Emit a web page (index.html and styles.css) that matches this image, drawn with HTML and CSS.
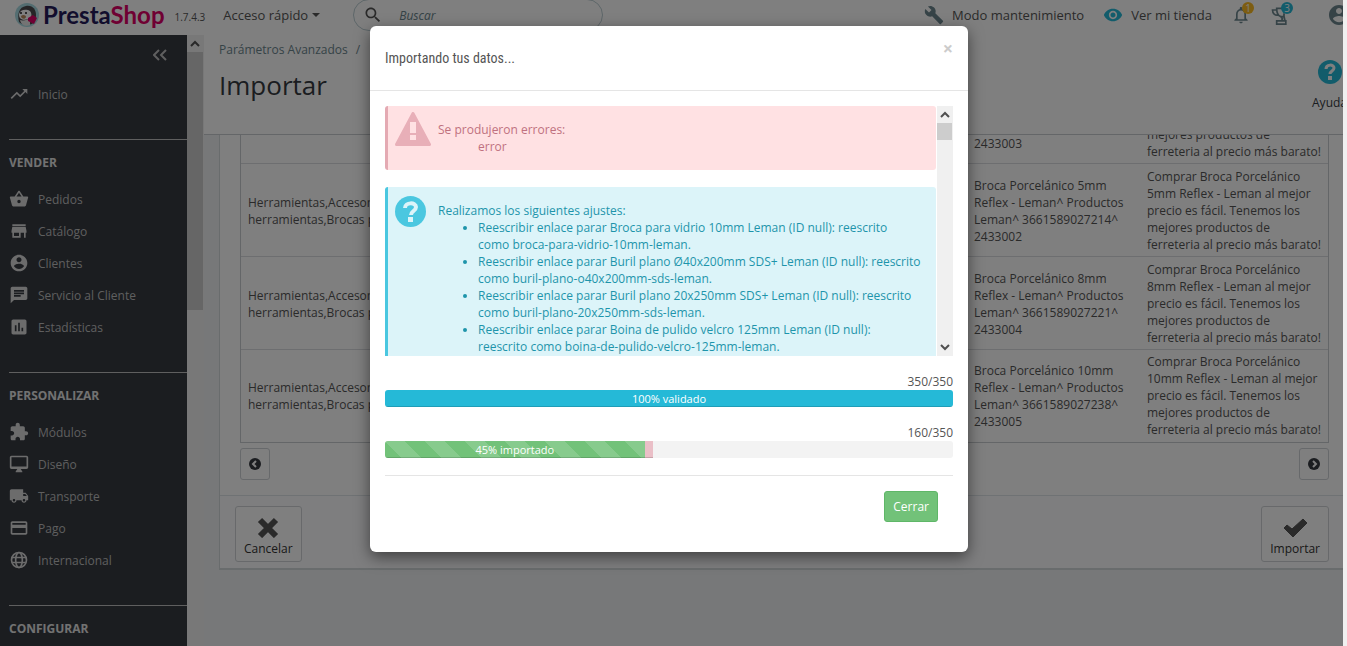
FILE: index.html
```html
<!DOCTYPE html>
<html lang="es">
<head>
<meta charset="utf-8">
<meta name="viewport" content="width=device-width, initial-scale=1">
<title>Importar</title>
<link rel="stylesheet" href="styles.css">
</head>
<body>
<div class="app">
  <header class="topbar">
    <a class="brand" href="#">
      <svg class="brand-mark" viewBox="0 0 24 24" aria-hidden="true">
        <circle cx="12" cy="12" r="12" fill="#a9dbe2"/>
        <path d="M4 19C2 11 4 4 11 3c7-1 10 4 10 9 0 4-1 7-4 9-4 1-10 1-13-2z" fill="#4c4a4e"/>
        <path d="M4 11c1-4 5-5 9-4 3 1 4 4 3 7-2 3-9 4-11 1-1-1-1-3-1-4z" fill="#fff"/>
        <path d="M5 17c3 1 8 0 10-2v7c-4 2-9 0-10-5z" fill="#e8e8e8"/>
        <path d="M6 13c2-2 5-1 5 1-1 3-5 2-5-1z" fill="#b98a5c"/>
        <circle cx="6" cy="10" r="1" fill="#222"/><circle cx="11" cy="10" r="1" fill="#222"/>
        <path d="M13 15l5-3 4 3-3 6-6-3z" fill="#df0067"/>
      </svg>
      <span class="brand-name">Presta<span class="brand-accent">Shop</span></span>
    </a>
    <span class="version">1.7.4.3</span>
    <button class="quick" type="button">Acceso rápido <span class="caret"></span></button>
    <form class="search" role="search">
      <label for="q" aria-label="Buscar"><svg class="icon" viewBox="0 0 24 24"><path d="M15.500 14h-.790l-.280-.270C15.410 12.590 16 11.110 16 9.500 16 5.910 13.090 3 9.500 3S3 5.910 3 9.500 5.910 16 9.500 16c1.610 0 3.090-.590 4.230-1.570l.270.280v.790l5 4.990L20.490 19l-4.990-5zm-6 0C7.010 14 5 11.990 5 9.500S7.010 5 9.500 5 14 7.010 14 9.500 11.990 14 9.500 14z"/></svg></label>
      <input id="q" type="text" placeholder="Buscar">
    </form>
    <nav class="tools">
      <a class="tool" href="#"><svg class="icon" viewBox="0 0 24 24"><path d="M22.700 19l-9.100-9.100c.9-2.300.4-5-1.500-6.900-2-2-5-2.400-7.400-1.300L9 6 6 9 1.600 4.700C.4 7.100.9 10.100 2.900 12.100c1.900 1.900 4.600 2.400 6.900 1.500l9.100 9.100c.4.400 1 .4 1.400 0l2.300-2.300c.5-.4.5-1.100.1-1.400z"/></svg>Modo mantenimiento</a>
      <a class="tool" href="#"><svg class="icon cyan" viewBox="0 0 24 24"><path d="M12 4.500C7 4.500 2.730 7.610 1 12c1.730 4.390 6 7.500 11 7.500s9.270-3.110 11-7.500c-1.730-4.390-6-7.500-11-7.500zM12 17c-2.760 0-5-2.240-5-5s2.240-5 5-5 5 2.240 5 5-2.240 5-5 5zm0-8c-1.660 0-3 1.340-3 3s1.340 3 3 3 3-1.340 3-3-1.340-3-3-3z"/></svg>Ver mi tienda</a>
      <button class="notice" type="button" aria-label="Notificaciones"><svg class="icon" viewBox="0 0 24 24"><path d="M12 22c1.100 0 2-.9 2-2h-4c0 1.100.9 2 2 2zm6-6v-5c0-3.070-1.630-5.640-4.500-6.320V4c0-.830-.670-1.500-1.500-1.500s-1.500.670-1.500 1.500v.680C7.640 5.360 6 7.920 6 11v5l-2 2v1h16v-1l-2-2zm-2 1H8v-6c0-2.480 1.510-4.500 4-4.500s4 2.020 4 4.500v6z"/></svg><span class="badge amber">1</span></button>
      <button class="notice" type="button" aria-label="Logros"><svg class="icon line" viewBox="0 0 24 24"><path d="M17 4H8c0 5 1 9 5 10h4M8 6H3c0 4 3 7 7 6M13 14c2 1 2 3 1 5M17 10c-1 3 0 6 1 9M8 19h11v4H8z"/></svg><span class="badge blue">3</span></button>
      <button class="account" type="button" aria-label="Cuenta"><svg class="icon" viewBox="0 0 24 24"><path d="M12 2C6.480 2 2 6.480 2 12s4.480 10 10 10 10-4.480 10-10S17.520 2 12 2zm0 3c1.660 0 3 1.340 3 3s-1.340 3-3 3-3-1.340-3-3 1.340-3 3-3zm0 14.200c-2.500 0-4.710-1.280-6-3.220.030-1.990 4-3.080 6-3.080 1.990 0 5.970 1.090 6 3.080-1.290 1.940-3.500 3.220-6 3.220z"/></svg></button>
    </nav>
  </header>

  <div class="shell">
    <nav class="sidebar">
      <button class="collapse" type="button" aria-label="Contraer"><svg viewBox="0 0 14 12"><path d="M6 1L1 6l5 5M13 1L8 6l5 5"/></svg></button>
      <a class="item home" href="#"><svg class="icon" viewBox="0 0 24 24"><path d="M16 6l2.290 2.290-4.880 4.880-4-4L2 16.590 3.410 18l6-6 4 4 6.300-6.290L22 12V6z"/></svg>Inicio</a>
      <section class="group">
        <h2>VENDER</h2>
        <a class="item" href="#"><svg class="icon" viewBox="0 0 24 24"><path d="M17.210 9l-4.380-6.560c-.190-.280-.510-.420-.830-.420-.320 0-.640.140-.830.430L6.790 9H2c-.550 0-1 .450-1 1 0 .090.010.180.040.270l2.540 9.270c.230.840 1 1.460 1.920 1.460h13c.920 0 1.690-.620 1.930-1.460l2.540-9.270L23 10c0-.550-.450-1-1-1h-4.790zM9 9l3-4.400L15 9H9zm3 8c-1.100 0-2-.9-2-2s.9-2 2-2 2 .9 2 2-.9 2-2 2z"/></svg>Pedidos</a>
        <a class="item" href="#"><svg class="icon" viewBox="0 0 24 24"><path d="M20 4H4v2h16V4zm1 10v-2l-1-5H4l-1 5v2h1v6h10v-6h4v6h2v-6h1zm-9 4H6v-4h6v4z"/></svg>Catálogo</a>
        <a class="item" href="#"><svg class="icon" viewBox="0 0 24 24"><path d="M12 2C6.480 2 2 6.480 2 12s4.480 10 10 10 10-4.480 10-10S17.520 2 12 2zm0 3c1.660 0 3 1.340 3 3s-1.340 3-3 3-3-1.340-3-3 1.340-3 3-3zm0 14.200c-2.500 0-4.710-1.280-6-3.220.030-1.990 4-3.080 6-3.080 1.990 0 5.970 1.090 6 3.080-1.290 1.940-3.500 3.220-6 3.220z"/></svg>Clientes</a>
        <a class="item" href="#"><svg class="icon" viewBox="0 0 24 24"><path d="M20 2H4c-1.100 0-1.990.9-1.990 2L2 22l4-4h14c1.100 0 2-.9 2-2V4c0-1.100-.9-2-2-2zM6 9h12v2H6V9zm8 5H6v-2h8v2zm4-6H6V6h12v2z"/></svg>Servicio al Cliente</a>
        <a class="item" href="#"><svg class="icon" viewBox="0 0 24 24"><path d="M19 3H5c-1.100 0-2 .9-2 2v14c0 1.100.9 2 2 2h14c1.100 0 2-.9 2-2V5c0-1.100-.9-2-2-2zM9 17H7v-7h2v7zm4 0h-2V7h2v10zm4 0h-2v-4h2v4z"/></svg>Estadísticas</a>
      </section>
      <section class="group">
        <h2>PERSONALIZAR</h2>
        <a class="item" href="#"><svg class="icon" viewBox="0 0 24 24"><path d="M20.500 11H19V7c0-1.100-.9-2-2-2h-4V3.500C13 2.120 11.880 1 10.500 1S8 2.120 8 3.500V5H4c-1.100 0-1.990.9-1.990 2v3.800H3.500c1.490 0 2.700 1.210 2.700 2.700s-1.210 2.700-2.700 2.700H2V20c0 1.100.9 2 2 2h3.800v-1.500c0-1.490 1.210-2.700 2.700-2.700 1.490 0 2.700 1.210 2.700 2.700V22H17c1.100 0 2-.9 2-2v-4h1.500c1.380 0 2.500-1.120 2.500-2.500S21.880 11 20.500 11z"/></svg>Módulos</a>
        <a class="item" href="#"><svg class="icon" viewBox="0 0 24 24"><path d="M21 2H3c-1.100 0-2 .9-2 2v12c0 1.100.9 2 2 2h7l-2 3v1h8v-1l-2-3h7c1.100 0 2-.9 2-2V4c0-1.100-.9-2-2-2zm0 13H3V4h18v11z"/></svg>Diseño</a>
        <a class="item" href="#"><svg class="icon" viewBox="0 0 24 24"><path d="M20 8h-3V4H3c-1.100 0-2 .9-2 2v11h2c0 1.660 1.340 3 3 3s3-1.340 3-3h6c0 1.660 1.340 3 3 3s3-1.340 3-3h2v-5l-3-4zM6 18.500c-.830 0-1.500-.670-1.500-1.500s.670-1.500 1.500-1.500 1.500.670 1.500 1.500-.670 1.500-1.500 1.500zm13.500-9l1.960 2.500H17V9.500h2.500zm-1.500 9c-.830 0-1.500-.670-1.500-1.500s.670-1.500 1.500-1.500 1.500.670 1.500 1.500-.670 1.500-1.500 1.500z"/></svg>Transporte</a>
        <a class="item" href="#"><svg class="icon" viewBox="0 0 24 24"><path d="M20 4H4c-1.110 0-1.990.890-1.990 2L2 18c0 1.110.890 2 2 2h16c1.110 0 2-.890 2-2V6c0-1.110-.890-2-2-2zm0 14H4v-6h16v6zm0-10H4V6h16v2z"/></svg>Pago</a>
        <a class="item" href="#"><svg class="icon line" viewBox="0 0 24 24"><circle cx="12" cy="12" r="9"/><ellipse cx="12" cy="12" rx="4" ry="9"/><path d="M4 9h16M4 15h16"/></svg>Internacional</a>
      </section>
      <section class="group">
        <h2>CONFIGURAR</h2>
      </section>
    </nav>
    <div class="rail side-rail" aria-hidden="true">
      <svg class="arrow" viewBox="0 0 16 17"><path d="M4 11l4-4 4 4"/></svg>
      <span class="thumb"></span>
    </div>

    <main class="main">
      <div class="page-head">
        <div>
          <p class="crumbs"><a href="#">Parámetros Avanzados</a><span>/</span></p>
          <h1>Importar</h1>
        </div>
        <button class="help" type="button"><svg viewBox="0 0 24 24"><circle cx="12" cy="12" r="12" fill="#25b9d7"/><path d="M8 9c0-5 8-5 8-1 0 3-4 3-4 6" fill="none" stroke="#fff" stroke-width="3"/><path d="M10 16h4v4h-4z" fill="#fff"/></svg>Ayuda</button>
      </div>
      <div class="viewport">
        <div class="panel">
          <div class="panel-body">
            <table class="data">
              <colgroup><col class="c-cat"><col><col class="c-title"><col class="c-desc"></colgroup>
              <tbody>
                <tr><td></td><td></td><td>Broca Porcelánico 6mm Reflex - Leman^ Productos Leman^ 3661589027207^ 2433003</td><td>Comprar Broca Porcelánico 6mm Reflex - Leman al mejor precio es fácil. Tenemos los mejores productos de ferreteria al precio más barato!</td></tr>
                <tr><td>Herramientas,Accesorios herramientas,Brocas porcelánico</td><td></td><td>Broca Porcelánico 5mm Reflex - Leman^ Productos Leman^ 3661589027214^ 2433002</td><td>Comprar Broca Porcelánico 5mm Reflex - Leman al mejor precio es fácil. Tenemos los mejores productos de ferreteria al precio más barato!</td></tr>
                <tr><td>Herramientas,Accesorios herramientas,Brocas porcelánico</td><td></td><td>Broca Porcelánico 8mm Reflex - Leman^ Productos Leman^ 3661589027221^ 2433004</td><td>Comprar Broca Porcelánico 8mm Reflex - Leman al mejor precio es fácil. Tenemos los mejores productos de ferreteria al precio más barato!</td></tr>
                <tr><td>Herramientas,Accesorios herramientas,Brocas porcelánico</td><td></td><td>Broca Porcelánico 10mm Reflex - Leman^ Productos Leman^ 3661589027238^ 2433005</td><td>Comprar Broca Porcelánico 10mm Reflex - Leman al mejor precio es fácil. Tenemos los mejores productos de ferreteria al precio más barato!</td></tr>
              </tbody>
            </table>
            <div class="pager">
              <button type="button" aria-label="Anterior"><svg viewBox="0 0 12 12"><circle cx="6" cy="6" r="6" fill="#363a41"/><path d="M7 3L4 6l3 3" fill="none" stroke="#fff" stroke-width="2"/></svg></button>
              <button type="button" aria-label="Siguiente"><svg viewBox="0 0 12 12"><circle cx="6" cy="6" r="6" fill="#363a41"/><path d="M5 3l3 3-3 3" fill="none" stroke="#fff" stroke-width="2"/></svg></button>
            </div>
          </div>
          <div class="panel-foot">
            <button type="button"><svg viewBox="0 0 24 22"><path d="M4 4l16 16M20 4L4 20" fill="none" stroke="#555" stroke-width="6"/></svg>Cancelar</button>
            <button type="button"><svg viewBox="0 0 24 22"><path d="M1 12l3-3 5 4L20 3l4 4-14 14z" fill="#555" stroke="#555" stroke-linejoin="round"/></svg>Importar</button>
          </div>
        </div>
      </div>
    </main>
  </div>

  <div class="overlay">
    <div class="modal" role="dialog" aria-modal="true" aria-labelledby="modal-title">
      <div class="modal-head">
        <h2 id="modal-title">Importando tus datos...</h2>
        <button class="close" type="button" aria-label="Cerrar ventana">×</button>
      </div>
      <div class="modal-body">
        <div class="log">
          <div class="messages">
            <div class="alert danger">
              <svg viewBox="0 0 36 34" aria-hidden="true"><path d="M18 1.500L34.500 32.500H1.500z" fill="#e8afb8" stroke="#e8afb8" stroke-width="3" stroke-linejoin="round"/><path d="M15 10h6v11h-6zM15 23h6v5h-6z" fill="#ffe1e3"/></svg>
              <div><p>Se produjeron errores:</p><ul><li>error</li></ul></div>
            </div>
            <div class="alert info">
              <svg viewBox="0 0 31 31" aria-hidden="true"><circle cx="15.500" cy="15.500" r="15.500" fill="#4ac7e0"/><path d="M10 12c0-6 11-6 11-1 0 4-5 4-5 8" fill="none" stroke="#dcf4f9" stroke-width="4"/><path d="M13 21h5v5h-5z" fill="#dcf4f9"/></svg>
              <div><p>Realizamos los siguientes ajustes:</p>
                <ul>
                  <li>Reescribir enlace parar Broca para vidrio 10mm Leman (ID null): reescrito como broca-para-vidrio-10mm-leman.</li>
                  <li>Reescribir enlace parar Buril plano Ø40x200mm SDS+ Leman (ID null): reescrito como buril-plano-o40x200mm-sds-leman.</li>
                  <li>Reescribir enlace parar Buril plano 20x250mm SDS+ Leman (ID null): reescrito como buril-plano-20x250mm-sds-leman.</li>
                  <li>Reescribir enlace parar Boina de pulido velcro 125mm Leman (ID null): reescrito como boina-de-pulido-velcro-125mm-leman.</li>
                </ul>
              </div>
            </div>
          </div>
          <div class="rail" aria-hidden="true">
            <svg class="arrow" viewBox="0 0 16 17"><path d="M4 11l4-4 4 4"/></svg>
            <span class="thumb"></span>
            <svg class="arrow" viewBox="0 0 16 17"><path d="M4 6l4 4 4-4"/></svg>
          </div>
        </div>
        <div class="step">
          <span class="count">350/350</span>
          <div class="progress"><div class="bar done" style="width:100%">100% validado</div></div>
        </div>
        <div class="step">
          <span class="count">160/350</span>
          <div class="progress"><div class="bar striped" style="width:45.71%">45% importado</div><div class="bar rest" style="width:1.4%"></div></div>
        </div>
        <div class="modal-foot"><button class="primary" type="button">Cerrar</button></div>
      </div>
    </div>
  </div>
</div>
</body>
</html>
```

FILE: styles.css
```css
* { box-sizing: border-box; }
body {
  margin: 0;
  padding-right: 4px;
  background: #f0f0f0;
  color: #555;
  font: 12px/17px "Open Sans", "Noto Sans", sans-serif;
}
h1, h2, p, ul { margin: 0; }
a { color: inherit; text-decoration: none; }
button { font: inherit; color: inherit; padding: 0; border: 0; background: none; cursor: pointer; }
svg { display: block; flex: none; }
.icon { width: 20px; height: 20px; fill: currentColor; }
.icon.line { fill: none; stroke: currentColor; stroke-width: 2; }

.app {
  position: relative;
  display: flex;
  flex-direction: column;
  height: 100vh;
  overflow: hidden;
}

/* Top bar */
.topbar {
  display: flex;
  align-items: center;
  flex: none;
  height: 35px;
  padding: 0 0 5px 15px;
  background: #fff;
  color: #555;
  font-size: 13px;
}
.brand { display: flex; align-items: center; gap: 4px; }
.brand-mark { width: 24px; height: 24px; }
.brand-name { color: #251b5b; font: 700 24px/30px Lato, sans-serif; }
.brand-accent { color: #df0067; }
.version { margin: 4px 18px 0 10px; font-size: 10px; }
.quick { display: flex; align-items: center; gap: 4px; }
.caret { border: 4px solid transparent; border-top-color: currentColor; border-bottom: 0; }
.search {
  display: flex;
  align-items: center;
  gap: 16px;
  width: 250px;
  height: 32px;
  margin-left: 33px;
  padding-left: 9px;
  border: 1px solid #bbcdd2;
  border-radius: 16px;
}
.search input {
  width: 160px;
  padding: 0;
  border: 0;
  outline: 0;
  background: none;
  font: italic 12px/17px "Open Sans", sans-serif;
}
.search input::placeholder { color: #6c868e; opacity: 1; }
.tools { display: flex; align-items: center; gap: 19px; margin-left: auto; margin-right: -8px; }
.tool { display: flex; align-items: center; gap: 8px; white-space: nowrap; }
.tools .icon { color: #6c868e; }
.tools .icon.cyan { color: #25b9d7; }
.notice { position: relative; }
.account { margin-left: 18px; }
.account .icon { width: 24px; height: 24px; }
.badge {
  position: absolute;
  top: -3px;
  right: -3px;
  width: 12px;
  height: 12px;
  border-radius: 6px;
  color: #fff;
  font-size: 10px;
  line-height: 12px;
  text-align: center;
}
.badge.amber { background: #fbbb22; }
.badge.blue { background: #25b9d7; }

/* Sidebar */
.shell { display: flex; flex: 1; min-height: 0; }
.sidebar {
  display: flex;
  flex-direction: column;
  flex: none;
  width: 187px;
  padding-left: 9px;
  overflow: hidden;
  background: #363a41;
  color: #bebebe;
}
.collapse { align-self: flex-end; margin: 14px 20px 17px 0; }
.collapse svg { width: 14px; height: 12px; fill: none; stroke: #bebebe; stroke-width: 2; }
.item { display: flex; align-items: center; gap: 9px; height: 32px; flex: none; }
.item .icon { color: #d8d8d8; }
.home { margin-bottom: 29px; }
.group { flex: none; padding-bottom: 29px; border-top: 1px solid #bebebe; }
.group h2 { padding: 14px 0 12px; color: #e4e4e4; font-size: 12px; font-weight: 700; line-height: 17px; }

/* Drawn scrollbars */
.rail { display: flex; flex-direction: column; flex: none; width: 16px; background: #f0f0f0; }
.side-rail { width: 17px; }
.arrow { width: 16px; height: 17px; fill: none; stroke: #505050; stroke-width: 2; }
.arrow:last-child { margin-top: auto; }
.thumb { height: 17px; margin-right: 1px; background: #cdcdcd; }
.side-rail .thumb { height: 258px; }

/* Main area */
.main { display: flex; flex-direction: column; flex: 1; min-width: 0; background: #eff1f2; }
.page-head {
  display: flex;
  justify-content: space-between;
  flex: none;
  height: 100px;
  padding: 6px 0 0 15px;
  overflow: hidden;
  background: #fff;
  border-bottom: 1px solid #c8ccd0;
}
.crumbs { display: flex; gap: 8px; color: #6c868e; }
.page-head h1 { padding-top: 7px; color: #363a41; font-size: 26px; font-weight: 400; line-height: 40px; }
.help {
  display: flex;
  flex-direction: column;
  align-items: center;
  gap: 10px;
  align-self: flex-start;
  margin: 19px -4px 0 0;
  color: #363a41;
}
.help svg { width: 24px; height: 24px; }
.viewport { flex: 1; min-height: 0; overflow: hidden; padding-left: 15px; }
.panel { background: #fff; border: 1px solid #d3d8db; border-width: 0 0 2px 1px; }
.panel-body { padding: 0 14px 15px 20px; }
.data {
  width: 100%;
  margin-top: -65px;
  border: 1px solid #c8ccd0;
  border-collapse: separate;
  border-spacing: 0;
  table-layout: fixed;
}
.data td { height: 93px; padding: 4px 7px 3px; border-bottom: 1px solid #dadde0; vertical-align: middle; }
.data tr:last-child td { height: 92px; padding: 3px 7px 4px; border-bottom: 0; }
.c-cat { width: 210px; }
.c-title { width: 173px; }
.c-desc { width: 188px; }
.pager { display: flex; justify-content: space-between; padding-top: 5px; }
.pager button {
  display: grid;
  place-items: center;
  width: 30px;
  height: 32px;
  border: 1px solid #ced2d6;
  border-radius: 3px;
}
.pager svg { width: 12px; height: 12px; }
.panel-foot {
  display: flex;
  justify-content: space-between;
  padding: 10px 14px 6px 15px;
  background: #fcfdfe;
  border-top: 1px solid #dfe4e8;
}
.panel-foot button {
  display: flex;
  flex-direction: column;
  align-items: center;
  gap: 2px;
  padding: 9px 8px 4px;
  border: 1px solid #d0d3d7;
  border-radius: 3px;
  background: #fff;
  color: #333;
}
.panel-foot svg { width: 24px; height: 22px; }

/* Modal */
.overlay {
  position: absolute;
  inset: 0;
  display: flex;
  justify-content: center;
  align-items: flex-start;
  padding: 26px 5px 0 0;
  background: rgba(0, 0, 0, .5);
}
.modal {
  width: 598px;
  background: #fff;
  border-radius: 6px;
  box-shadow: 0 5px 15px rgba(0, 0, 0, .5);
}
.modal-head {
  display: flex;
  justify-content: space-between;
  align-items: flex-start;
  padding: 14px 15px;
  border-bottom: 1px solid #e5e5e5;
}
.modal-head h2 {
  padding: 6px 0 5px;
  font: 400 14px/25px "Ubuntu Condensed", "Roboto Condensed", "Liberation Sans Narrow", "Open Sans Condensed", sans-serif;
}
.close { color: #ccc; font-size: 18px; font-weight: 700; line-height: 16px; }
.modal-body { padding: 15px 15px 30px; }
.log { display: flex; gap: 1px; height: 250px; margin-bottom: 17px; overflow: hidden; }
.messages { flex: 1; }
.alert { display: flex; gap: 7px; margin-bottom: 17px; padding: 0 15px 15px 7px; border-left: 3px solid; border-radius: 3px; }
.alert svg { width: 36px; height: 34px; margin-top: 6px; }
.alert div { padding-top: 15px; }
.alert ul { padding-left: 40px; }
.danger { background: #ffe1e3; border-color: #e4aab3; color: #c0717f; }
.danger ul { list-style: none; }
.info { background: #dcf4f9; border-color: #4ac7e0; color: #1e94ab; gap: 12px; }
.info svg { width: 31px; height: 31px; margin-top: 9px; }
.step { display: flex; flex-direction: column; margin-bottom: 17px; }
.count { align-self: flex-end; }
.progress { display: flex; height: 17px; overflow: hidden; border-radius: 3px; background: #f3f3f3; }
.bar { color: #fff; font-size: 11px; line-height: 17px; text-align: center; box-shadow: inset 0 -1px 0 rgba(0, 0, 0, .15); }
.done { background: #25b9d7; }
.striped {
  background: #72c279 linear-gradient(45deg, rgba(255, 255, 255, .15) 25%, transparent 25%, transparent 50%, rgba(255, 255, 255, .15) 50%, rgba(255, 255, 255, .15) 75%, transparent 75%) 0 0 / 40px 40px;
}
.rest { background: #eabfc7; }
.modal-foot { display: flex; justify-content: flex-end; padding: 15px 15px 0; border-top: 1px solid #e5e5e5; }
.primary { height: 31px; padding: 0 8px; border: 1px solid #5fb768; border-radius: 3px; background: #72c279; color: #fff; }
```
